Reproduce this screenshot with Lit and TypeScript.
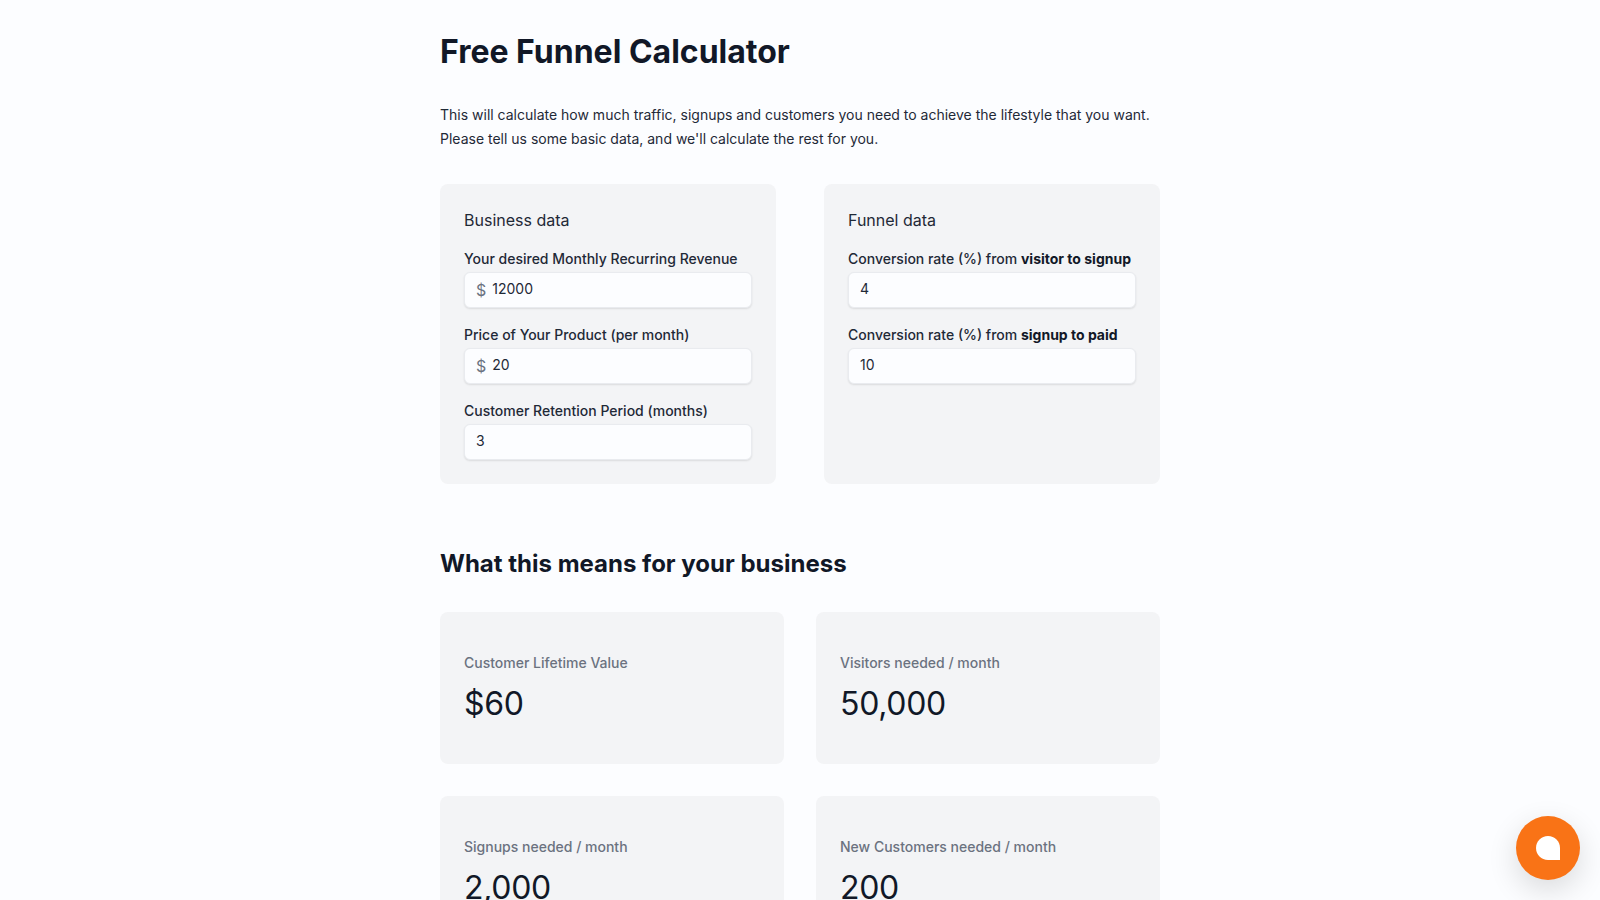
import { LitElement, html, css } from "lit";
import { customElement } from "lit/decorators.js";

@customElement("app-root")
export class AppRoot extends LitElement {
  static styles = css`
    :host {
      display: block;
      height: 100vh;
      overflow: hidden;
      background: #fcfdff;
      color: #111827;
      font-family: Inter, "Liberation Sans", sans-serif;
      font-size: 14px;
      line-height: 20px;
    }
    * { box-sizing: border-box; }
    .page { width: 720px; margin: 0 auto; padding-top: 32px; }
    h1 { margin: 0; font-size: 32px; line-height: 40px; font-weight: 700; }
    .intro { margin: 31px 0 0; font-size: 14px; line-height: 24px; color: #1f2937; }
    .forms { display: grid; grid-template-columns: 1fr 1fr; gap: 48px; margin-top: 33px; }
    .panel { background: #f3f4f6; border-radius: 8px; padding: 24px; }
    h3 { margin: 0; font-size: 16px; line-height: 24px; font-weight: 400; color: #1f2937; }
    .field { margin-top: 17px; }
    label { display: block; font-weight: 500; font-size: 14px; line-height: 20px; color: #1f2937; }
    label b { font-weight: 700; color: #111827; }
    .input {
      margin-top: 3px; height: 36px; background: #fcfdff; border-radius: 6px;
      border: 1px solid #e9ebef;
      box-shadow: 0 1px 2px rgba(0,0,0,.1);
      display: flex; align-items: center; padding: 0 11px 2px; gap: 6px;
      font-size: 14px; color: #1f2937;
    }
    .cur { color: #6b7280; font-size: 16px; position: relative; top: 1px; }
    h2 { margin: 64px 0 0; font-size: 24px; line-height: 32px; font-weight: 700; }
    .stats { display: grid; grid-template-columns: 1fr 1fr; gap: 32px; margin-top: 32px; }
    .stat { background: #f3f4f6; border-radius: 8px; padding: 40px 24px; }
    .stat .k { color: #6b7280; font-weight: 500; font-size: 14px; line-height: 22px; }
    .stat .v { margin-top: 10px; font-size: 32px; line-height: 40px; font-weight: 400; letter-spacing: -0.32px; }
    .chat {
      position: fixed; right: 20px; bottom: 20px; width: 64px; height: 64px; border-radius: 50%;
      background: #f97316; display: flex; align-items: center; justify-content: center;
      box-shadow: 0 10px 30px rgba(0,0,0,.14);
    }
    .chat svg { width: 24px; height: 24px; display: block; }
  `;

  field(label: unknown, value: string, cur = false) {
    return html`<div class="field">
      <label>${label}</label>
      <div class="input">${cur ? html`<span class="cur">$</span>` : ""}<span>${value}</span></div>
    </div>`;
  }

  stat(k: string, v: string) {
    return html`<div class="stat"><div class="k">${k}</div><div class="v">${v}</div></div>`;
  }

  render() {
    return html`<div class="page">
        <h1>Free Funnel Calculator</h1>
        <p class="intro">This will calculate how much traffic, signups and customers you need to achieve the lifestyle that you want.<br />Please tell us some basic data, and we'll calculate the rest for you.</p>
        <div class="forms">
          <section class="panel">
            <h3>Business data</h3>
            ${this.field("Your desired Monthly Recurring Revenue", "12000", true)}
            ${this.field("Price of Your Product (per month)", "20", true)}
            ${this.field("Customer Retention Period (months)", "3")}
          </section>
          <section class="panel">
            <h3>Funnel data</h3>
            ${this.field(html`Conversion rate (%) from <b>visitor to signup</b>`, "4")}
            ${this.field(html`Conversion rate (%) from <b>signup to paid</b>`, "10")}
          </section>
        </div>
        <h2>What this means for your business</h2>
        <div class="stats">
          ${this.stat("Customer Lifetime Value", "$60")}
          ${this.stat("Visitors needed / month", "50,000")}
          ${this.stat("Signups needed / month", "2,000")}
          ${this.stat("New Customers needed / month", "200")}
        </div>
      </div>
      <div class="chat"><svg viewBox="0 0 24 24"><path fill="#fff" d="M12 0C5.4 0 0 5.4 0 12s5.4 12 12 12h12V12C24 5.4 18.6 0 12 0z"/></svg></div>`;
  }
}
